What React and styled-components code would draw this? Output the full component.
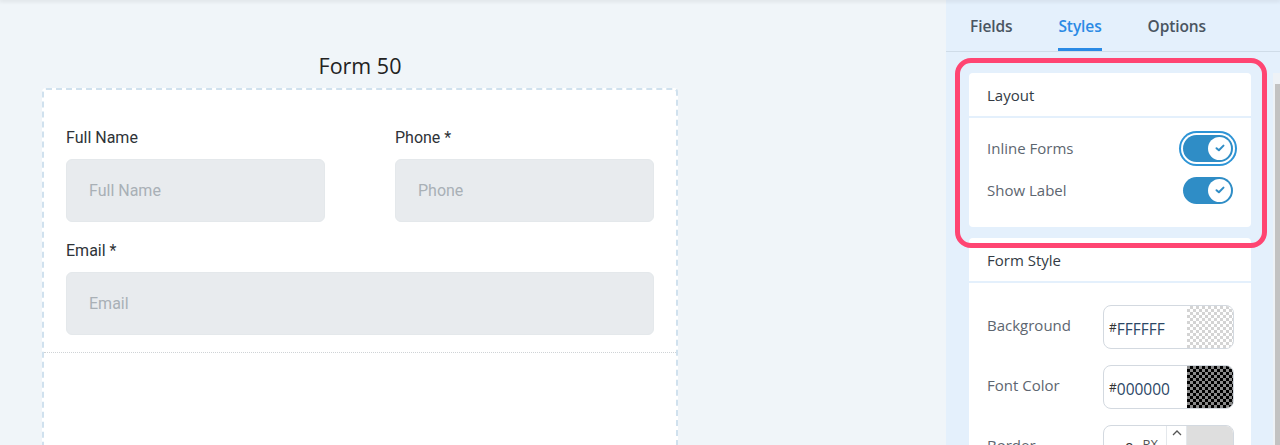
import React from "react";
import styled, { createGlobalStyle } from "styled-components";

const GlobalStyle = createGlobalStyle`
  html, body { margin: 0; padding: 0; overflow: hidden; }
  body { background: #f0f5f9; font-family: "Open Sans", "Noto Sans", sans-serif; }
  * { box-sizing: border-box; }
`;

const Page = styled.div`
  width: 1280px;
  height: 445px;
  display: flex;
  flex-direction: column;
  overflow: hidden;
  background: #f0f5f9;
`;

const TopEdge = styled.div`
  height: 0;
  flex: none;
  box-shadow: 0 0 4px 1px rgba(0, 0, 0, 0.14);
  position: relative;
  z-index: 3;
`;

const Main = styled.div`
  flex: 1;
  display: flex;
  min-height: 0;
`;

const Canvas = styled.div`
  flex: 1;
  padding: 51px 0 0 42px;
  overflow: hidden;
`;

const FormColumn = styled.div`
  width: 636px;
  display: flex;
  flex-direction: column;
`;

const FormTitle = styled.div`
  text-align: center;
  font-family: "Open Sans", sans-serif;
  font-size: 21.5px;
  line-height: 30px;
  color: #222;
  margin-bottom: 7px;
`;

const FormBox = styled.div`
  background: #fff;
  border: 2px dashed #d0e1ee;
  border-bottom: none;
  border-radius: 4px 4px 0 0;
`;

const FieldsArea = styled.div`
  padding: 38px 22px 17px;
`;

const FieldGrid = styled.div`
  display: grid;
  grid-template-columns: 259px 259px;
  column-gap: 70px;
  row-gap: 19px;
`;

const Field = styled.div`
  display: flex;
  flex-direction: column;
  grid-column: ${(p) => (p.$wide ? "1 / -1" : "auto")};
`;

const FieldLabel = styled.label`
  font-family: Roboto, sans-serif;
  font-size: 16px;
  line-height: 20px;
  color: #2e3338;
  margin-bottom: 11px;
`;

const TextInput = styled.input`
  height: 63px;
  width: 100%;
  background: #e8ebee;
  border: 1px solid #e4e8eb;
  border-radius: 6px;
  padding: 0 22px;
  font-family: Roboto, sans-serif;
  font-size: 16px;
  color: #333;
  outline: none;
  &::placeholder { color: #a9b0b6; }
`;

const FormFooter = styled.div`
  height: 120px;
  border-top: 1px dotted #cfd3d6;
`;

const Sidebar = styled.div`
  width: 334px;
  flex: none;
  background: #e4f0fc;
  display: flex;
  flex-direction: column;
`;

const Tabs = styled.div`
  display: flex;
  height: 52px;
  padding-left: 24px;
  gap: 46px;
  border-bottom: 1px solid #cfdce8;
`;

const Tab = styled.div`
  height: 51px;
  padding-top: 4px;
  display: flex;
  align-items: center;
  font-size: 15.5px;
  font-weight: 600;
  letter-spacing: -0.1px;
  color: ${(p) => (p.$active ? "#2a8ae5" : "#4a5561")};
  border-bottom: 3px solid ${(p) => (p.$active ? "#2a8ae5" : "transparent")};
`;

const SidebarBody = styled.div`
  flex: 1;
  display: flex;
  min-height: 0;
`;

const Cards = styled.div`
  width: 305px;
  padding: 21px 0 0 23px;
  display: flex;
  flex-direction: column;
  gap: 11px;
`;

const Card = styled.div`
  position: relative;
  background: #fff;
  border-radius: 4px;
  flex: none;
`;

const CardHeader = styled.div`
  height: 45px;
  padding: 0 18px;
  display: flex;
  align-items: center;
  font-size: 15px;
  color: #333b44;
  border-bottom: 2px solid #e4f0fc;
`;

const CardBody = styled.div`
  padding: ${(p) => p.$pad};
  display: flex;
  flex-direction: column;
  gap: ${(p) => p.$gap || "0px"};
`;

const Row = styled.div`
  display: flex;
  align-items: center;
  justify-content: space-between;
  height: ${(p) => p.$h};
`;

const RowLabel = styled.span`
  font-size: 15px;
  color: #5d6670;
  margin-bottom: ${(p) => (p.$raised ? "4px" : "0")};
`;

const Highlight = styled.div`
  position: absolute;
  left: -14px;
  top: -15px;
  right: -16px;
  bottom: -21px;
  border: 5px solid #ff4572;
  border-radius: 16px;
  pointer-events: none;
  z-index: 2;
`;

const ToggleTrack = styled.div`
  width: 50px;
  height: 27px;
  border-radius: 14px;
  background: #2f8dc6;
  display: flex;
  align-items: center;
  justify-content: flex-end;
  padding-right: 2px;
  box-shadow: ${(p) =>
    p.$focused ? "0 0 0 2px #fff, 0 0 0 4px #2d94d6" : "none"};
  margin-right: 1px;
`;

const Knob = styled.div`
  width: 23px;
  height: 23px;
  border-radius: 50%;
  background: #fff;
  display: flex;
  align-items: center;
  justify-content: center;
`;

const Toggle = ({ focused }) => (
  <ToggleTrack $focused={focused}>
    <Knob>
      <svg width="10" height="8" viewBox="0 0 10 8">
        <path
          d="M1.5 4.2 L3.9 6.3 L8.5 1.6"
          fill="none"
          stroke="#2f8dc6"
          strokeWidth="2"
          strokeLinecap="round"
          strokeLinejoin="round"
        />
      </svg>
    </Knob>
  </ToggleTrack>
);

const ColorBox = styled.div`
  width: 131px;
  height: 44px;
  border: 1px solid #d3d9e0;
  border-radius: 8px;
  overflow: hidden;
  display: flex;
  background: #fff;
`;

const ColorText = styled.div`
  flex: 1;
  display: flex;
  align-items: center;
  padding: 4px 0 0 5px;
  font-size: 15.5px;
  color: #2c4766;
`;

const Hash = styled.span`
  font-size: 12px;
  align-self: flex-start;
  margin-top: 9px;
  color: #333;
`;

const Swatch = styled.div`
  width: 46px;
  background: ${(p) =>
    p.$dark
      ? "repeating-conic-gradient(#000 0 25%, #8a8a8a 0 50%) 0 0 / 6px 6px"
      : "repeating-conic-gradient(#d4d4d4 0 25%, #fff 0 50%) 0 0 / 6px 6px"};
`;

const NumberBox = styled.div`
  width: 131px;
  height: 44px;
  border: 1px solid #d3d9e0;
  border-radius: 8px;
  overflow: hidden;
  display: flex;
  background: #fff;
`;

const NumberValue = styled.div`
  width: 62px;
  display: flex;
  align-items: flex-start;
  gap: 9px;
  padding: 11px 0 0 21px;
  font-size: 15px;
  line-height: 20px;
  color: #333;
`;

const Unit = styled.span`
  font-size: 13px;
  color: #555;
  margin-top: -3px;
`;

const Spinner = styled.div`
  width: 21px;
  border-left: 1px solid #e4e8ec;
  border-right: 1px solid #e4e8ec;
  display: flex;
  justify-content: center;
  padding-top: 3px;
`;

const GrayCell = styled.div`
  flex: 1;
  background: #dedede;
`;

const Scrollbar = styled.div`
  margin: 21px 0 0 auto;
  width: 7px;
  background: #eef2f6;
  display: flex;
  flex-direction: column;
  align-items: flex-end;
`;

const Thumb = styled.div`
  margin-top: 11px;
  width: 5px;
  flex: 1;
  background: #c2c2c2;
`;

export default function App() {
  return (
    <>
      <GlobalStyle />
      <Page>
        <TopEdge />
        <Main>
          <Canvas>
            <FormColumn>
              <FormTitle>Form 50</FormTitle>
              <FormBox>
                <FieldsArea>
                  <FieldGrid>
                    <Field>
                      <FieldLabel>Full Name</FieldLabel>
                      <TextInput placeholder="Full Name" readOnly />
                    </Field>
                    <Field>
                      <FieldLabel>Phone *</FieldLabel>
                      <TextInput placeholder="Phone" readOnly />
                    </Field>
                    <Field $wide>
                      <FieldLabel>Email *</FieldLabel>
                      <TextInput placeholder="Email" readOnly />
                    </Field>
                  </FieldGrid>
                </FieldsArea>
                <FormFooter />
              </FormBox>
            </FormColumn>
          </Canvas>
          <Sidebar>
            <Tabs>
              <Tab>Fields</Tab>
              <Tab $active>Styles</Tab>
              <Tab>Options</Tab>
            </Tabs>
            <SidebarBody>
              <Cards>
                <Card>
                  <CardHeader>Layout</CardHeader>
                  <CardBody $pad="9px 17px 16px 18px">
                    <Row $h="42px">
                      <RowLabel>Inline Forms</RowLabel>
                      <Toggle focused />
                    </Row>
                    <Row $h="42px">
                      <RowLabel>Show Label</RowLabel>
                      <Toggle />
                    </Row>
                  </CardBody>
                  <Highlight />
                </Card>
                <Card>
                  <CardHeader>Form Style</CardHeader>
                  <CardBody $pad="22px 17px 16px 18px" $gap="16px">
                    <Row $h="44px">
                      <RowLabel $raised>Background</RowLabel>
                      <ColorBox>
                        <ColorText>
                          <Hash>#</Hash>FFFFFF
                        </ColorText>
                        <Swatch />
                      </ColorBox>
                    </Row>
                    <Row $h="44px">
                      <RowLabel $raised>Font Color</RowLabel>
                      <ColorBox>
                        <ColorText>
                          <Hash>#</Hash>000000
                        </ColorText>
                        <Swatch $dark />
                      </ColorBox>
                    </Row>
                    <Row $h="44px">
                      <RowLabel $raised>Border</RowLabel>
                      <NumberBox>
                        <NumberValue>
                          0<Unit>PX</Unit>
                        </NumberValue>
                        <Spinner>
                          <svg width="12" height="8" viewBox="0 0 12 8">
                            <path
                              d="M2 6 L6 2 L10 6"
                              fill="none"
                              stroke="#555"
                              strokeWidth="1.3"
                            />
                          </svg>
                        </Spinner>
                        <GrayCell />
                      </NumberBox>
                    </Row>
                  </CardBody>
                </Card>
              </Cards>
              <Scrollbar>
                <Thumb />
              </Scrollbar>
            </SidebarBody>
          </Sidebar>
        </Main>
      </Page>
    </>
  );
}
